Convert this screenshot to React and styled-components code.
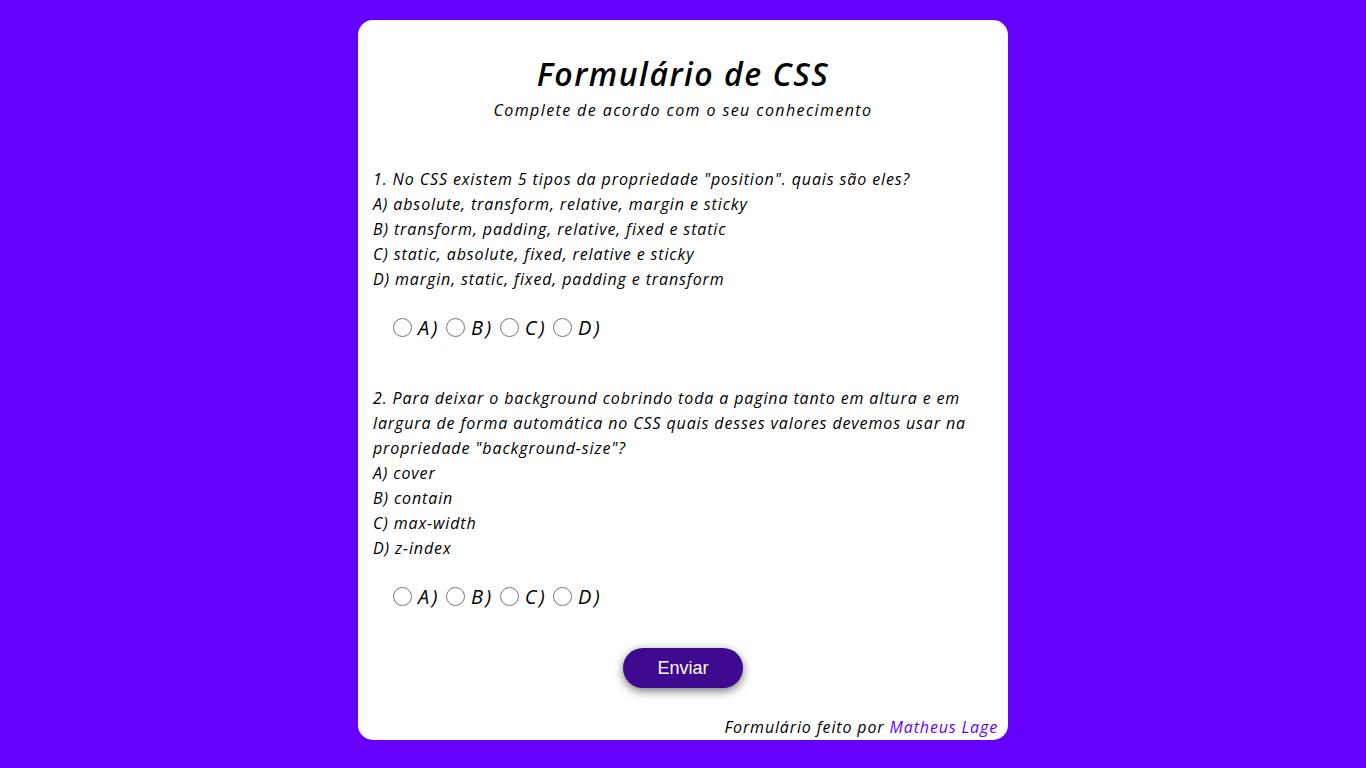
import styled, { createGlobalStyle } from "styled-components";

const GlobalStyle = createGlobalStyle`
    * {
        box-sizing: border-box;
    }
    body {
        margin: 0;
        background: #6600ff;
        font-family: "Open Sans", "DejaVu Sans", sans-serif;
    }
`

const Page = styled.div`
    width: 100vw;
    min-height: 100vh;
    display: flex;
    justify-content: center;
    padding: 20px 0 28px;
`
const Card = styled.form`
    width: 650px;
    background-color: white;
    border-radius: 15px;
    padding: 30px 15px 0;
    display: flex;
    flex-direction: column;
`
const Title = styled.h1`
    margin: 0;
    font-size: 32px;
    line-height: 48px;
    font-weight: 600;
    font-style: italic;
    letter-spacing: 1.5px;
    text-align: center;
    color: black;
`
const Subtitle = styled.p`
    margin: 0;
    font-size: 16px;
    line-height: 24px;
    font-style: italic;
    letter-spacing: 1.4px;
    text-align: center;
`
const Question = styled.div`
    margin-top: ${props => props.top}px;
    font-size: 16px;
    line-height: 25px;
    font-style: italic;
    letter-spacing: 0.88px;
    color: black;
`
const Options = styled.div`
    margin-top: 20px;
    height: 30px;
    padding-left: 14px;
    display: flex;
    align-items: center;
`
const Radio = styled.input`
    width: 19px;
    height: 19px;
    margin: 1px 6px 0 6px;
    accent-color: #6600ff;
`
const RadioLabel = styled.label`
    font-size: 20px;
    font-style: italic;
    letter-spacing: 2.5px;
`
const Button = styled.button`
    align-self: center;
    margin-top: 37px;
    width: 120px;
    height: 40px;
    border: none;
    border-radius: 20px;
    background-color: #3d0a8f;
    color: white;
    font-family: "Liberation Sans", Arial, sans-serif;
    font-size: 18px;
    box-shadow: 0 3px 10px rgba(0, 0, 0, 0.55);
    cursor: pointer;
`
const Footer = styled.p`
    margin: 26px -5px 0 0;
    text-align: right;
    font-size: 16px;
    line-height: 26px;
    font-style: italic;
    letter-spacing: 0.86px;
`
const Author = styled.a`
    color: #6600ff;
    text-decoration: none;
`

const questions = [
    {
        id: 'q1',
        top: 45,
        lines: [
            '1. No CSS existem 5 tipos da propriedade "position". quais são eles?',
            'A) absolute, transform, relative, margin e sticky',
            'B) transform, padding, relative, fixed e static',
            'C) static, absolute, fixed, relative e sticky',
            'D) margin, static, fixed, padding e transform',
        ],
    },
    {
        id: 'q2',
        top: 44,
        lines: [
            '2. Para deixar o background cobrindo toda a pagina tanto em altura e em largura de forma automática no CSS quais desses valores devemos usar na propriedade "background-size"?',
            'A) cover',
            'B) contain',
            'C) max-width',
            'D) z-index',
        ],
    },
]

const App = () => {
    return (
        <Page>
            <GlobalStyle />
            <Card onSubmit={(e) => e.preventDefault()}>
                <Title>Formulário de CSS</Title>
                <Subtitle>Complete de acordo com o seu conhecimento</Subtitle>
                {questions.map(q => (
                    <div key={q.id}>
                        <Question top={q.top}>
                            {q.lines.map(l => <div key={l}>{l}</div>)}
                        </Question>
                        <Options>
                            {['A', 'B', 'C', 'D'].map(o => (
                                <span key={o} style={{ display: 'contents' }}>
                                    <Radio type='radio' name={q.id} id={q.id + o} />
                                    <RadioLabel htmlFor={q.id + o}>{o})</RadioLabel>
                                </span>
                            ))}
                        </Options>
                    </div>
                ))}
                <Button type='submit'>Enviar</Button>
                <Footer>Formulário feito por <Author>Matheus Lage</Author></Footer>
            </Card>
        </Page>
    )
}

export default App
